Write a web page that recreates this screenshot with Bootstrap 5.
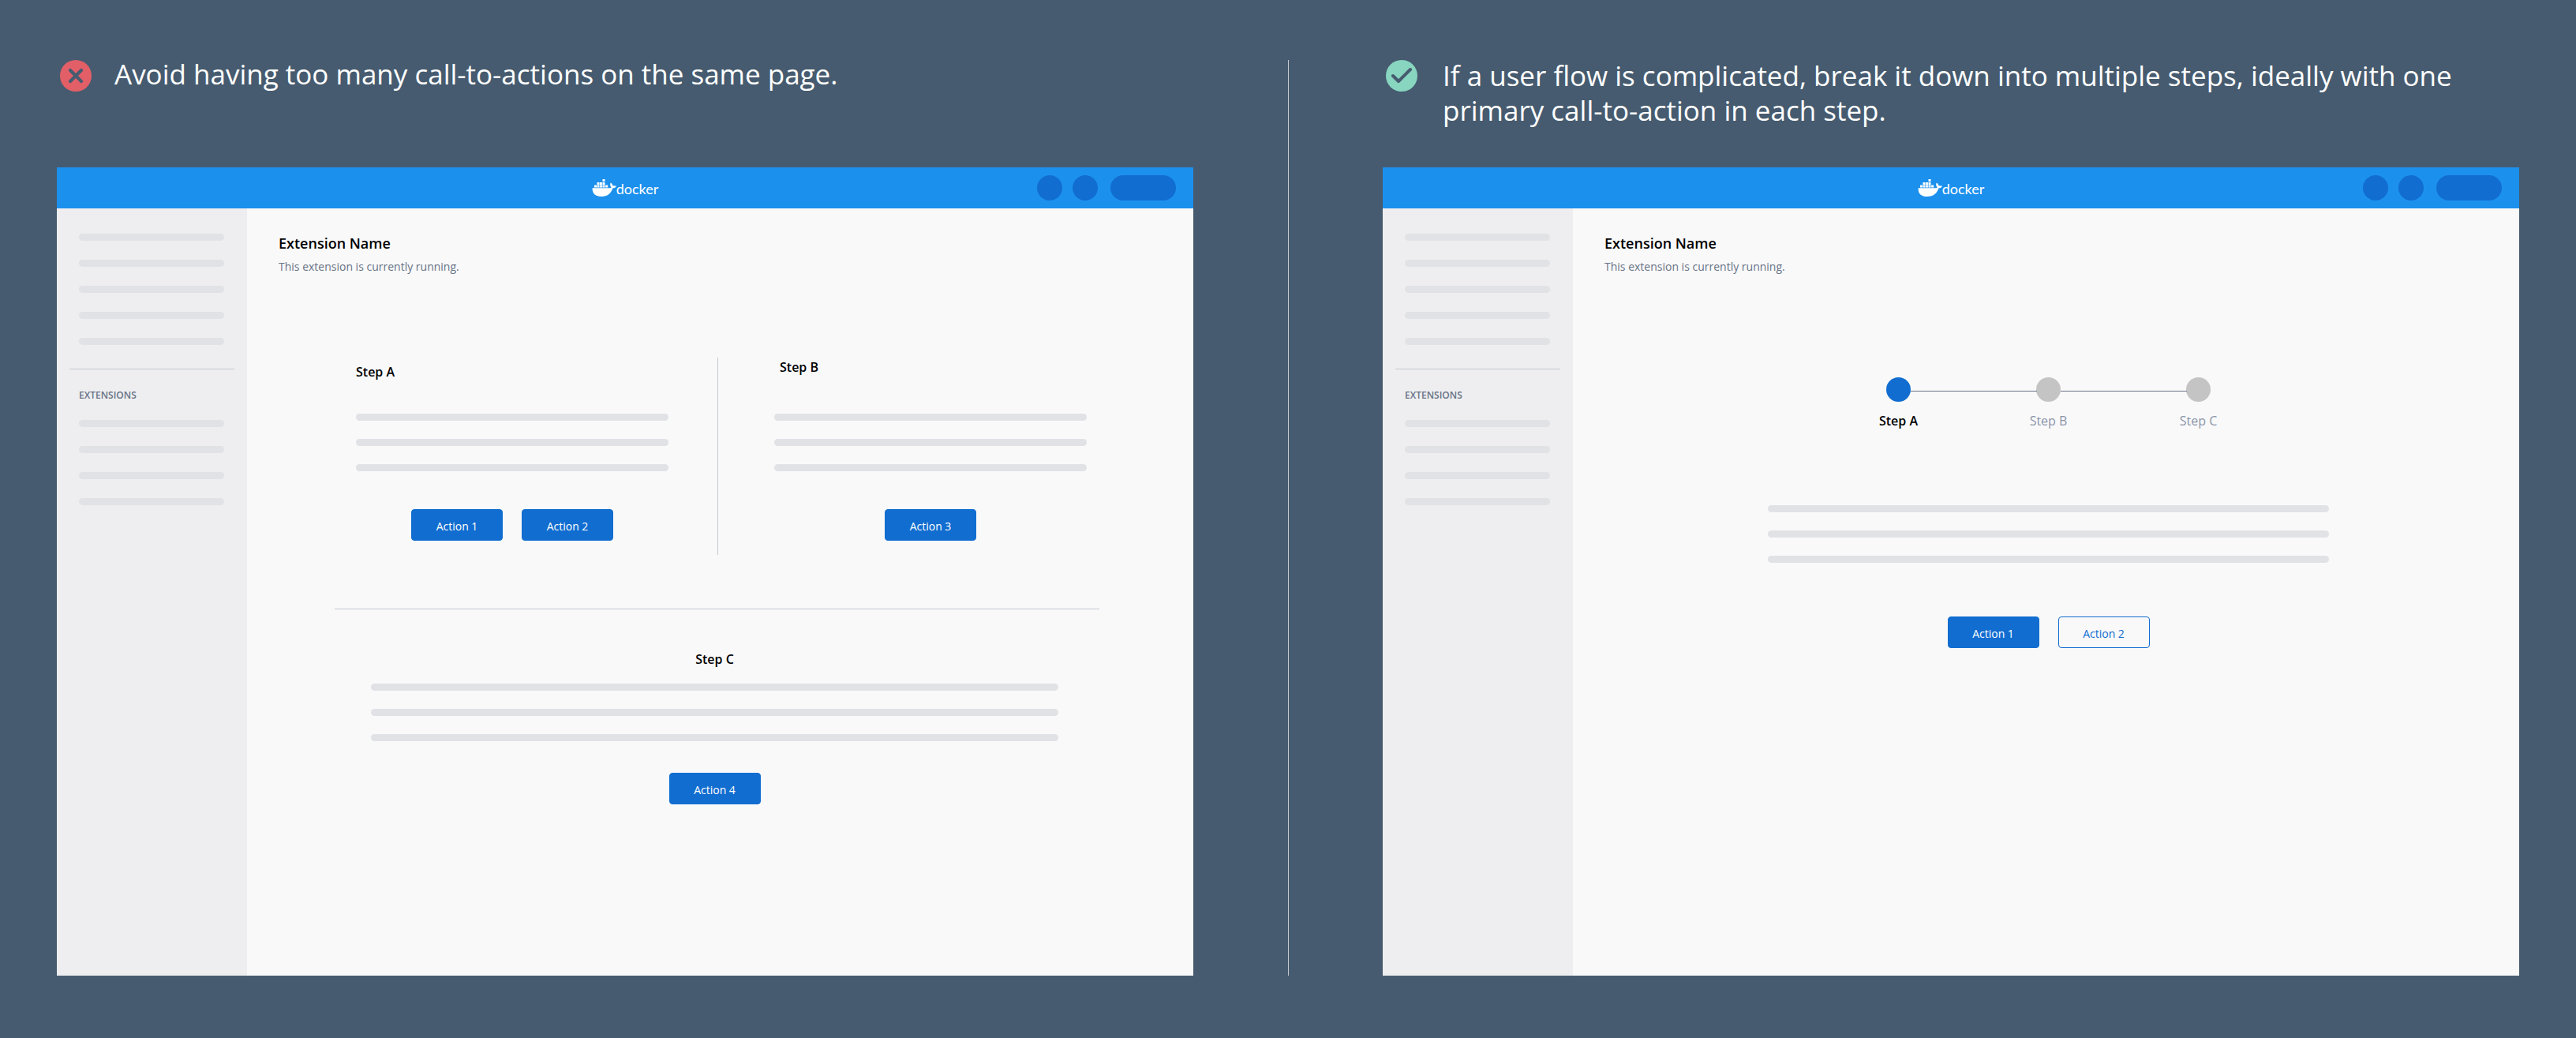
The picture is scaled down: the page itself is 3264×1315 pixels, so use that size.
<!DOCTYPE html>
<html lang="en">
<head>
<meta charset="utf-8">
<meta name="viewport" content="width=device-width, initial-scale=1">
<title>Call-to-action guidelines</title>
<link href="https://cdn.jsdelivr.net/npm/bootstrap@5.3.0/dist/css/bootstrap.min.css" rel="stylesheet">
<style>
  body { background: #465b6f; font-family: "Open Sans", sans-serif; color: #000; }
  .board { padding: 76px 72px 79px; min-height: 100vh; }
  .example { flex: 1 1 0; min-width: 0; }
  .divider { width: 240px; }
  .divider .vr { width: 1px; background: #c4c8d1; opacity: 1; }
  .rule-head { min-height: 136px; padding-left: 4px; gap: 29px; }
  .rule-head h2 { font-size: 35px; line-height: 44px; font-weight: 400; color: #fff; margin: -2px 0 0; }
  .rule-head.single h2 { margin-top: -4px; }
  .rule-head.double { gap: 32px; }
  .rule-head svg { width: 40px; height: 40px; }
  .app-window { min-height: 1024px; background: #f9f9fa; }
  .top-bar { height: 52px; background: #1c90ed; padding: 0 22px; }
  .side-slot { flex: 1 1 0; }
  .brand { color: #fff; text-decoration: none; }
  .brand span { font: 400 18px/22px Lato, sans-serif; padding-top: 2px; }
  .brand svg { width: 31px; height: 24px; }
  .round-btn { width: 32px; height: 32px; border: 0; border-radius: 16px; background: #116dd0; padding: 0; margin-left: 13px; }
  .round-btn.wide { width: 83px; margin-left: 16px; }
  .side-nav { width: 241px; background: #eeeef0; padding: 32px 16px; }
  .stub { display: block; height: 9px; border-radius: 5px; background: #e1e2e6; }
  .nav-list { display: grid; gap: 24px; padding: 0 13px 0 12px; margin: 0; list-style: none; }
  .side-nav hr, .step-rule { margin: 0; border: 0; height: 1px; background: #c4c8d1; opacity: 1; }
  .side-nav hr { margin: 30px 0 24px; }
  .side-nav h3 { font-size: 12px; line-height: 18px; font-weight: 600; color: #677285; margin: 0 0 22px; padding-left: 12px; }
  .content-area { padding: 31px 40px; }
  .content-area h1 { font-size: 18px; line-height: 26px; font-weight: 600; margin: 0; }
  .content-area .status { font-size: 14px; line-height: 20px; color: #677285; margin: 7px 0 0; }
  .step-title { font-size: 16px; line-height: 24px; font-weight: 600; margin: 0; }
  .lines { display: grid; gap: 23px; }
  .steps { padding: 105px 79px 0 71px; }
  .step-split { width: 1px; height: 250px; background: #c4c8d1; }
  .step-rule { margin-top: 68px; }
  .step-col { flex: 1 1 0; }
  .step-col .lines { padding-top: 41px; }
  .step-col.first { padding: 6px 62px 0 27px; }
  .step-col.second { padding: 0 16px 0 71px; }
  .step-col.second .step-title { padding-left: 7px; }
  .step-col.second .lines { padding-top: 47px; }
  .actions { gap: 24px; padding-top: 48px; }
  .cta { width: 116px; height: 40px; border-radius: 4px; font-size: 14px; line-height: 20px; padding: 11px 0 7px; background: #116dd0; border: 1px solid #116dd0; color: #fff; }
  .cta.hollow { background: #f9f9fa; color: #116dd0; }
  .step-last { padding: 51px 52px 0 46px; }
  .step-last .lines { padding-top: 19px; }
  .step-last .actions { padding-top: 40px; }
  .wizard { padding: 130px 201px 0 207px; }
  .stepper { list-style: none; padding: 0; margin: 0 auto; width: 570px; }
  .stepper li { flex: 1 1 0; font-size: 16px; line-height: 24px; color: #8c95a8; text-align: center; position: relative; }
  .stepper li.current { color: #000; font-weight: 600; }
  .stepper .dot { display: block; width: 31px; height: 31px; border-radius: 50%; background: #c4c4c4; margin: 0 auto 12px; }
  .stepper .current .dot { background: #116dd0; }
  .stepper li + li::before { content: ""; position: absolute; top: 17px; right: calc(50% + 15px); width: calc(100% - 30px); height: 1px; background: #677285; }
  .wizard .lines { padding-top: 95px; }
  .wizard .actions { padding-top: 68px; }
</style>
<script src="https://cdn.jsdelivr.net/npm/bootstrap@5.3.0/dist/js/bootstrap.bundle.min.js"></script>
</head>
<body>
<svg class="d-none" aria-hidden="true">
  <symbol id="whale" viewBox="0 0 31 24">
    <g fill="#fff">
      <path d="M13.500 1h3v3h-3zM6.500 5h3v3h-3zM10 5h3v3h-3zM13.500 5h3v3h-3zM3 8.500h3v3H3zM6.500 8.500h3v3h-3zM10 8.500h3v3h-3zM13.500 8.500h3v3h-3zM17.200 8.500h3v3h-3z"/>
      <path d="M.6 12.200H22.500C23.700 12.200 24.300 11.900 24.700 11.400 23 9.600 22.700 7.300 23.900 5.600 25.400 6.500 26.200 7.800 26.300 9.300 28 9 30 9.200 31 9.700 30.300 11.300 28.800 12.300 26.500 12.300 24 19.500 19.700 23 12 23 4.500 23 .2 19.500.6 12.200Z"/>
    </g>
  </symbol>
</svg>
<main class="board d-flex">
  <section class="example">
    <header class="rule-head single d-flex align-items-start">
      <svg class="flex-shrink-0" viewBox="0 0 40 40" aria-hidden="true"><circle cx="20" cy="20" r="20" fill="#e25f68"/><path d="M13 13 27 27M27 13 13 27" stroke="#465b6f" stroke-width="4.200" stroke-linecap="round"/></svg>
      <h2>Avoid having too many call-to-actions on the same page.</h2>
    </header>
    <div class="app-window d-flex flex-column">
      <div class="top-bar d-flex align-items-center">
        <div class="side-slot"></div>
        <a class="brand d-flex align-items-center" href="#"><svg aria-hidden="true"><use href="#whale"/></svg><span>docker</span></a>
        <div class="side-slot d-flex justify-content-end">
          <button class="round-btn" type="button"></button><button class="round-btn" type="button"></button><button class="round-btn wide" type="button"></button>
        </div>
      </div>
      <div class="d-flex flex-grow-1">
        <nav class="side-nav flex-shrink-0">
          <ul class="nav-list"><li class="stub"></li><li class="stub"></li><li class="stub"></li><li class="stub"></li><li class="stub"></li></ul>
          <hr>
          <h3>EXTENSIONS</h3>
          <ul class="nav-list"><li class="stub"></li><li class="stub"></li><li class="stub"></li><li class="stub"></li></ul>
        </nav>
        <div class="content-area flex-grow-1">
          <h1>Extension Name</h1>
          <p class="status">This extension is currently running.</p>
          <div class="steps">
            <div class="d-flex">
              <section class="step-col first">
                <h2 class="step-title">Step A</h2>
                <div class="lines"><span class="stub"></span><span class="stub"></span><span class="stub"></span></div>
                <div class="actions d-flex justify-content-center"><button class="cta" type="button">Action 1</button><button class="cta" type="button">Action 2</button></div>
              </section>
              <div class="step-split"></div>
              <section class="step-col second">
                <h2 class="step-title">Step B</h2>
                <div class="lines"><span class="stub"></span><span class="stub"></span><span class="stub"></span></div>
                <div class="actions d-flex justify-content-center"><button class="cta" type="button">Action 3</button></div>
              </section>
            </div>
            <hr class="step-rule">
            <section class="step-last">
              <h2 class="step-title text-center">Step C</h2>
              <div class="lines"><span class="stub"></span><span class="stub"></span><span class="stub"></span></div>
              <div class="actions d-flex justify-content-center"><button class="cta" type="button">Action 4</button></div>
            </section>
          </div>
        </div>
      </div>
    </div>
  </section>

  <div class="divider d-flex justify-content-center flex-shrink-0"><div class="vr"></div></div>

  <section class="example">
    <header class="rule-head double d-flex align-items-start">
      <svg class="flex-shrink-0" viewBox="0 0 40 40" aria-hidden="true"><circle cx="20" cy="20" r="20" fill="#88d5c0"/><path d="M9 20 16 27 31 12" fill="none" stroke="#465b6f" stroke-width="4" stroke-linecap="round" stroke-linejoin="round"/></svg>
      <h2>If a user flow is complicated, break it down into multiple steps, ideally with one<br>primary call-to-action in each step.</h2>
    </header>
    <div class="app-window d-flex flex-column">
      <div class="top-bar d-flex align-items-center">
        <div class="side-slot"></div>
        <a class="brand d-flex align-items-center" href="#"><svg aria-hidden="true"><use href="#whale"/></svg><span>docker</span></a>
        <div class="side-slot d-flex justify-content-end">
          <button class="round-btn" type="button"></button><button class="round-btn" type="button"></button><button class="round-btn wide" type="button"></button>
        </div>
      </div>
      <div class="d-flex flex-grow-1">
        <nav class="side-nav flex-shrink-0">
          <ul class="nav-list"><li class="stub"></li><li class="stub"></li><li class="stub"></li><li class="stub"></li><li class="stub"></li></ul>
          <hr>
          <h3>EXTENSIONS</h3>
          <ul class="nav-list"><li class="stub"></li><li class="stub"></li><li class="stub"></li><li class="stub"></li></ul>
        </nav>
        <div class="content-area flex-grow-1">
          <h1>Extension Name</h1>
          <p class="status">This extension is currently running.</p>
          <div class="wizard">
            <ol class="stepper d-flex">
              <li class="current"><span class="dot"></span>Step A</li>
              <li><span class="dot"></span>Step B</li>
              <li><span class="dot"></span>Step C</li>
            </ol>
            <div class="lines"><span class="stub"></span><span class="stub"></span><span class="stub"></span></div>
            <div class="actions d-flex justify-content-center"><button class="cta" type="button">Action 1</button><button class="cta hollow" type="button">Action 2</button></div>
          </div>
        </div>
      </div>
    </div>
  </section>
</main>
</body>
</html>
